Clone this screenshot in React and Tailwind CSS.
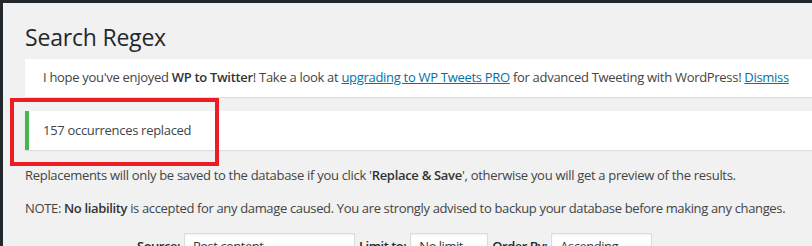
import React from "react";

const font = { fontFamily: '"Open Sans", "Noto Sans", sans-serif' };

function Select({ value, width }) {
  return (
    <div
      className={`relative h-[28px] bg-white border border-[#ddd] shadow-[inset_0_1px_2px_rgba(0,0,0,0.07)] text-[13px] text-[#32373c] pl-2 pt-[3px] ${width}`}
    >
      {value}
      <span className="absolute right-[7px] top-[8px] text-[9px] text-[#333]">▼</span>
    </div>
  );
}

export default function App() {
  return (
    <div className="relative w-[812px] h-[246px] overflow-hidden bg-[#f1f1f1] text-[#444]" style={font}>
      <div className="h-[3px] bg-[#23282d]" />
      <div className="absolute left-0 top-0 w-[3px] h-full bg-[#23282d]" />

      <div className="pl-[25px]">
        <h1 className="text-[23px] leading-[30px] text-[#23282d] pt-[19px] pb-[7px] tracking-[-0.2px]">
          Search Regex
        </h1>

        <div className="bg-white border-l-4 border-white shadow-[0_1px_1px_rgba(0,0,0,0.08)] h-[38px] flex items-center pl-[14px] text-[13px] tracking-[-0.3px]">
          <p>
            I hope you've enjoyed <strong className="font-semibold text-[#333]">WP to Twitter</strong>! Take a look at{" "}
            <a className="text-[#0073aa] underline">upgrading to WP Tweets PRO</a> for advanced Tweeting with WordPress!{" "}
            <a className="text-[#0073aa] underline">Dismiss</a>
          </p>
        </div>

        <div className="mt-[14px] bg-white border-l-4 border-[#46b450] shadow-[0_1px_1px_rgba(0,0,0,0.08)] h-[39px] flex items-center pl-[14px] text-[13px] tracking-[-0.3px]">
          <p>157 occurrences replaced</p>
        </div>

        <p className="mt-[15px] text-[13px] leading-[20px] tracking-[-0.3px]">
          Replacements will only be saved to the database if you click '
          <strong className="font-semibold text-[#333]">Replace &amp; Save</strong>', otherwise you will get a preview of the results.
        </p>
        <p className="mt-[13px] text-[13px] leading-[20px] tracking-[-0.35px]">
          NOTE: <strong className="font-semibold text-[#333]">No liability</strong> is accepted for any damage caused. You are strongly
          advised to backup your database before making any changes.
        </p>

        <div className="mt-[15px] ml-[112px] flex items-start gap-[4px] text-[13px] tracking-[-0.5px]">
          <span className="font-semibold text-[#23282d] pt-[4px]">Source:</span>
          <Select value="Post content" width="w-[171px]" />
          <span className="font-semibold text-[#23282d] pt-[4px]">Limit to:</span>
          <Select value="No limit" width="w-[78px]" />
          <span className="font-semibold text-[#23282d] pt-[4px]">Order By:</span>
          <Select value="Ascending" width="w-[101px]" />
        </div>
      </div>

      <div className="absolute left-[10px] top-[98px] w-[209px] h-[68px] border-[4px] border-[#ed1c24]" />
    </div>
  );
}
